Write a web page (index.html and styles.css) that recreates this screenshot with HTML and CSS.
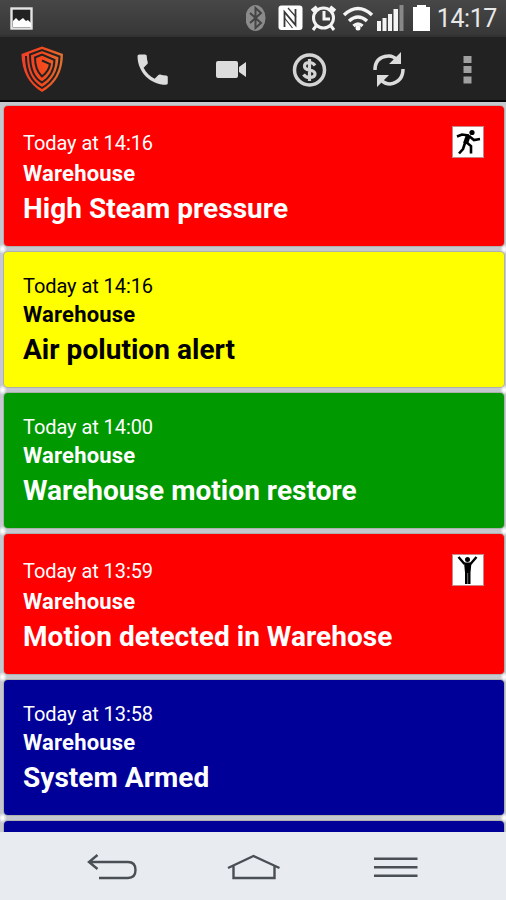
FILE: index.html
```html
<!DOCTYPE html>
<html lang="en">
<head>
<meta charset="utf-8">
<title>Alerts</title>
<link rel="stylesheet" href="styles.css">
</head>
<body>
<div class="screen">
  <header class="status">
    <svg class="shot" width="24" height="24" viewBox="0 0 24 24"><rect x="1.500" y="1.500" width="20" height="20" fill="#222" stroke="#e4e4e4" stroke-width="2.400"/><path d="M3 20v-6l3-3 3 3 4-3 3 3 2-1 3 3v4z" fill="#fff"/></svg>
    <div class="tray">
      <svg width="260" height="36" viewBox="246 0 260 36">
        <ellipse cx="255.500" cy="18" rx="10" ry="13" fill="#8b8b8b"/>
        <path d="M250 13l11 10-5.500 5V8l5.500 5-11 10" fill="none" stroke="#444" stroke-width="2"/>
        <rect x="278.500" y="5.500" width="24" height="24.500" rx="3" fill="#fff"/>
        <path d="M284.500 27V12l11 13V9" fill="none" stroke="#383838" stroke-width="1.800"/>
        <path d="M288 8l8 9M284.500 18l8 10" stroke="#383838" stroke-width="1.200"/>
        <g fill="none" stroke="#f4f4f4" stroke-width="3"><circle cx="323.500" cy="18" r="10"/><path d="M324 11v8h6M316 26l-3 4M331 26l3 4"/><path d="M312 11l5-4M335 11l-5-4" stroke-width="4"/></g>
        <g fill="none" stroke="#f4f4f4" stroke-width="3.500"><path d="M344 15q14-13 28 0M349 21q9-8 18 0M353.500 26q4.500-4 9 0"/></g><circle cx="358" cy="28" r="2.500" fill="#fff"/>
        <path d="M377 21h4v10h-4zM382.500 18h4v13h-4zM388 14h4v17h-4zM393.500 9h4.500v22h-4.500z" fill="#f4f4f4"/><path d="M399.500 5h4v26h-4z" fill="#888"/>
        <path d="M413 7h4V5h9v2h4v24h-17z" fill="#fff"/>
      </svg>
      <span class="clock">14:17</span>
    </div>
  </header>
  <nav class="bar">
    <svg width="506" height="65" viewBox="0 37 506 65">
      <defs><linearGradient id="shield" gradientUnits="userSpaceOnUse" x1="22" y1="0" x2="62" y2="0"><stop offset="0" stop-color="#f0402a"/><stop offset=".5" stop-color="#f6481c"/><stop offset="1" stop-color="#df7030"/></linearGradient></defs>
      <path d="M42 46.500L63 54Q63 80 42 92Q22 80 21.500 54z" fill="url(#shield)"/>
      <g fill="none" stroke="#222" stroke-width="2">
        <path d="M26 56Q26 79 42 88Q59 78 59.500 56.500L42 50L30 54.500Q30 76 42 82.500Q54 75 54.500 60L42 54.500L35 57.500Q35 70 42 76.500Q49 71 50 64L42 60.500"/>
      </g>
      <path transform="translate(132.500 49.500) scale(1.680)" d="M6.620 10.790c1.440 2.830 3.760 5.140 6.590 6.590l2.200-2.200c.27-.27.670-.36 1.020-.24 1.120.37 2.330.57 3.570.57.550 0 1 .45 1 1V20c0 .55-.45 1-1 1C10.610 21 3 13.390 3 4c0-.55.450-1 1-1h3.500c.55 0 1 .45 1 1 0 1.250.2 2.450.57 3.570.11.350.030.740-.25 1.020z" fill="#dcdcdc"/>
      <path d="M218 61h18q2 0 2 2v13q0 2-2 2h-18q-2 0-2-2V63q0-2 2-2zM239 67l7-5v15l-7-5z" fill="#dcdcdc"/>
      <circle cx="309.500" cy="70" r="15" fill="none" stroke="#d4d4d4" stroke-width="3.500"/>
      <path d="M315 65.500q-2-3-5.500-3-5 0-5 3.700 0 3 5 3.800 5.500.8 5.500 4t-5.500 3.500q-4 0-6-3M309.500 59v22" fill="none" stroke="#d4d4d4" stroke-width="3.200"/>
      <g fill="none" stroke="#dcdcdc" stroke-width="3.500"><path d="M375 70Q375 57 388 56Q393 55.500 397 60M403 69Q403 82 390 84Q385 84 381 80"/></g>
      <path d="M401 52v12h-12zM377 87V75h12z" fill="#dcdcdc"/>
      <path d="M463.500 56h8v7h-8zM463.500 66h8v7h-8zM463.500 76.500h8v7h-8z" fill="#a0a0a0"/>
    </svg>
  </nav>
  <main class="list">
    <article class="card red tall">
      <div class="row"><span class="time">Today at 14:16</span>
        <svg class="badge" width="32" height="32" viewBox="0 0 32 32"><circle cx="20" cy="6.500" r="2.600" fill="#000"/><path d="M16.500 9l-3 8.500" stroke="#000" stroke-width="5" fill="none"/><path d="M17 9.500l-7-1-5 2M17 10l5 4 6-1M14 16l5 4v7.500M13 17l-2 6-4 4.500" stroke="#000" stroke-width="2.600" fill="none"/></svg></div>
      <div class="site">Warehouse</div><div class="title">High Steam pressure</div>
    </article>
    <article class="card yellow">
      <div class="row"><span class="time">Today at 14:16</span></div>
      <div class="site">Warehouse</div><div class="title">Air polution alert</div>
    </article>
    <article class="card green">
      <div class="row"><span class="time">Today at 14:00</span></div>
      <div class="site">Warehouse</div><div class="title">Warehouse motion restore</div>
    </article>
    <article class="card red tall">
      <div class="row"><span class="time">Today at 13:59</span>
        <svg class="badge" width="32" height="32" viewBox="0 0 32 32"><circle cx="15.500" cy="5.500" r="2.500" fill="#000"/><path d="M6.500 3l6 7M24.500 3l-6 7" stroke="#000" stroke-width="2.400"/><path d="M12 8.500h7.500l-1 10v11.500h-5.500V18.500z" fill="#000"/><path d="M15.700 19v11" stroke="#777" stroke-width="1"/></svg></div>
      <div class="site">Warehouse</div><div class="title">Motion detected in Warehose</div>
    </article>
    <article class="card blue">
      <div class="row"><span class="time">Today at 13:58</span></div>
      <div class="site">Warehouse</div><div class="title">System Armed</div>
    </article>
    <article class="card blue"></article>
  </main>
  <footer class="keys">
    <svg width="506" height="68" viewBox="0 832 506 68" fill="none" stroke="#4a4e55" stroke-width="2.400">
      <path d="M97.500 855l-8.500 7 8.500 7M89 862h39q7.500 0 7.500 8t-7.500 8H99"/>
      <path d="M228 868l25.500-12 26 12M233.500 866v12h41v-12"/>
      <path d="M374 858.800h43.500M374 867.300h43.500M374 875.700h43.500"/>
    </svg>
  </footer>
</div>
</body>
</html>
```

FILE: styles.css
```css
* { box-sizing: border-box; }
body { margin: 0; background: #e8ecf0; font-family: Roboto, sans-serif; }
.screen { width: 506px; height: 900px; display: flex; flex-direction: column; overflow: hidden; }
svg { display: block; flex: none; }
.status { height: 37px; flex: none; display: flex; justify-content: space-between; background: linear-gradient(#474747, #373737); border-bottom: 2px solid #323232; }
.shot { margin: 7px 0 0 10px; }
.tray { display: grid; width: 260px; }
.tray > * { grid-area: 1 / 1; }
.clock { justify-self: end; margin-right: 9px; font-size: 25px; line-height: 38px; letter-spacing: -.4px; color: #e8e8e8; }
.bar { height: 65px; flex: none; background: #222; border-bottom: 2px solid #050505; }
.list { height: 730px; flex: none; overflow: hidden; display: flex; flex-direction: column; gap: 6px; padding: 4px 2px 0 4px; background: #c6c8cf; }
.card { position: relative; flex: none; height: 135.300px; border-radius: 4px; padding: 20px 20px 0 19px; color: #fff; box-shadow: 0 0 0 1px #aeb0ae; }
/* light notch at both ends of the gap under a card */
.card::before, .card::after { content: ""; position: absolute; bottom: -8px; width: 9px; height: 10px; background: radial-gradient(closest-side, #fff 20%, #fff0); z-index: -1; }
.card::before { left: -6px; }
.card::after { right: -5px; }
.list { position: relative; z-index: 0; }
.tall { height: 139.800px; }
.red { background: #f00; }
.yellow { background: #ff0; color: #000; }
.green { background: #090; }
.blue { background: #000099; }
.row { height: 27px; display: flex; align-items: center; justify-content: space-between; }
.tall .row { height: 32px; }
.badge { background: #fff; outline: 1px solid #c88; outline-offset: -1px; }
.time { font-size: 20px; letter-spacing: -.07px; padding-top: 1px; }
.site { font-size: 22px; line-height: 31px; font-weight: 700; letter-spacing: .2px; }
.title { font-size: 28px; line-height: 40px; font-weight: 700; white-space: nowrap; letter-spacing: .04px; }
.keys { height: 68px; flex: none; background: #e8ecf0; }
```
